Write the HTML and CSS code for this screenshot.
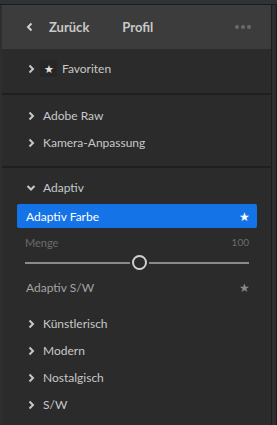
FILE: index.html
```html
<!DOCTYPE html>
<html lang="de">
<head>
    <meta charset="UTF-8">
    <meta name="viewport" content="width=device-width, initial-scale=1.0">
    <title>Profil</title>
    <link rel="stylesheet" href="styles.css">
</head>
<body>
    <div class="top-strip"></div>

    <div class="frame">
        <div class="panel">
            <!-- Header -->
            <div class="header">
                <span class="back">
                    <svg width="8" height="10" viewBox="0 0 8 10"><path d="M5.5 1.5 L2 5 L5.5 8.5" fill="none" stroke="#d0d0d0" stroke-width="2"/></svg>
                </span>
                <span class="back-label">Zurück</span>
                <span class="title">Profil</span>
                <span class="more"><i></i><i></i><i></i></span>
            </div>

            <!-- Favorites -->
            <div class="section fav">
                <div class="row">
                    <span class="chev"><svg width="8" height="10" viewBox="0 0 8 10"><path d="M2.5 1.5 L6 5 L2.5 8.5" fill="none" stroke="#c8c8c8" stroke-width="2"/></svg></span>
                    <span class="star-box">★</span>
                    <span class="label">Favoriten</span>
                </div>
            </div>

            <div class="section groups">
                <div class="row">
                    <span class="chev"><svg width="8" height="10" viewBox="0 0 8 10"><path d="M2.5 1.5 L6 5 L2.5 8.5" fill="none" stroke="#c8c8c8" stroke-width="2"/></svg></span>
                    <span class="label">Adobe Raw</span>
                </div>
                <div class="row">
                    <span class="chev"><svg width="8" height="10" viewBox="0 0 8 10"><path d="M2.5 1.5 L6 5 L2.5 8.5" fill="none" stroke="#c8c8c8" stroke-width="2"/></svg></span>
                    <span class="label">Kamera-Anpassung</span>
                </div>
            </div>

            <div class="section creative">
                <div class="row">
                    <span class="chev"><svg width="10" height="8" viewBox="0 0 10 8"><path d="M1.5 2 L5 5.5 L8.5 2" fill="none" stroke="#c8c8c8" stroke-width="2"/></svg></span>
                    <span class="label">Adaptiv</span>
                </div>

                <div class="profile selected">
                    <span>Adaptiv Farbe</span>
                    <span class="pstar">★</span>
                </div>

                <div class="amount">
                    <div class="amount-head">
                        <span>Menge</span>
                        <span>100</span>
                    </div>
                    <div class="slider">
                        <div class="track left"></div>
                        <div class="knob"></div>
                        <div class="track"></div>
                    </div>
                </div>

                <div class="profile">
                    <span>Adaptiv S/W</span>
                    <span class="pstar">★</span>
                </div>

                <div class="row spaced">
                    <span class="chev"><svg width="8" height="10" viewBox="0 0 8 10"><path d="M2.5 1.5 L6 5 L2.5 8.5" fill="none" stroke="#c8c8c8" stroke-width="2"/></svg></span>
                    <span class="label">Künstlerisch</span>
                </div>
                <div class="row">
                    <span class="chev"><svg width="8" height="10" viewBox="0 0 8 10"><path d="M2.5 1.5 L6 5 L2.5 8.5" fill="none" stroke="#c8c8c8" stroke-width="2"/></svg></span>
                    <span class="label">Modern</span>
                </div>
                <div class="row">
                    <span class="chev"><svg width="8" height="10" viewBox="0 0 8 10"><path d="M2.5 1.5 L6 5 L2.5 8.5" fill="none" stroke="#c8c8c8" stroke-width="2"/></svg></span>
                    <span class="label">Nostalgisch</span>
                </div>
                <div class="row">
                    <span class="chev"><svg width="8" height="10" viewBox="0 0 8 10"><path d="M2.5 1.5 L6 5 L2.5 8.5" fill="none" stroke="#c8c8c8" stroke-width="2"/></svg></span>
                    <span class="label">S/W</span>
                </div>
            </div>
        </div>

        <div class="scroll"></div>
    </div>
</body>
</html>
```

FILE: styles.css
```css
body {
    margin: 0;
    padding: 0;
    font-family: 'Lato', sans-serif;
    font-size: 12px;
    background-color: #2b2b2b;
    color: #c8c8c8;
    height: 425px;
    overflow: hidden;
}

.top-strip {
    height: 4px;
    background-color: #2f3336;
    border-bottom: 1px solid #1b1b1b;
}

.frame {
    display: flex;
    height: 420px;
}

.panel {
    flex: 1;
    border-left: 2px solid #2e2e2e;
    background-color: #2b2b2b;
}

.scroll {
    width: 4px;
    border-left: 1px solid #1c1c1c;
    border-right: 1px solid #1c1c1c;
    background-color: #2e2e2e;
}

.header {
    height: 44px;
    background-color: #3c3c3c;
    display: flex;
    align-items: center;
    font-size: 13px;
    font-weight: bold;
    color: #c9c9c9;
}

.back {
    width: 10px;
    margin-left: 24px;
    display: flex;
}

.back-label {
    margin-left: 13px;
}

.title {
    margin-left: 33px;
}

.more {
    margin-left: auto;
    margin-right: 20px;
    display: flex;
    gap: 2px;
}

.more i {
    width: 4px;
    height: 4px;
    border-radius: 50%;
    background-color: #6a6a6a;
}

.section {
    border-bottom: 2px solid #1f1f1f;
}

.fav {
    padding: 6px 0 11px;
}

.groups {
    padding: 7px 0 10px;
}

.creative {
    padding: 6px 0;
    border-bottom: none;
}

.row {
    height: 27px;
    display: flex;
    align-items: center;
    padding-left: 24px;
}

.row.spaced {
    margin-top: 11px;
}

.chev {
    width: 10px;
    display: flex;
    justify-content: center;
}

.label {
    margin-left: 7px;
}

.star-box {
    width: 17px;
    height: 17px;
    margin-left: 4px;
    background-color: #262626;
    border-radius: 2px;
    display: flex;
    align-items: center;
    justify-content: center;
    font-size: 11px;
    color: #e0e0e0;
}

.fav .label {
    margin-left: 5px;
}

.profile {
    margin: 0 14px 0 15px;
    height: 24px;
    padding: 0 7px 0 9px;
    display: flex;
    align-items: center;
    justify-content: space-between;
    border-radius: 2px;
    color: #a3a3a3;
}

.profile.selected {
    background-color: #1473e6;
    color: #ffffff;
    margin-top: 3px;
}

.pstar {
    font-size: 12px;
    color: #8a8a8a;
}

.selected .pstar {
    color: #ffffff;
}

.amount {
    padding: 8px 22px 5px 23px;
}

.amount-head {
    display: flex;
    justify-content: space-between;
    font-size: 11px;
    line-height: 13px;
    color: #6c6c6c;
}

.amount-head span:last-child {
    font-size: 10px;
}

.slider {
    display: flex;
    align-items: center;
    margin-top: 6px;
}

.track {
    flex: 1;
    height: 2px;
    background-color: #8a8a8a;
}

.track.left {
    flex: none;
    width: 105px;
}

.knob {
    width: 11px;
    height: 11px;
    border: 2px solid #d0d0d0;
    border-radius: 50%;
    margin: 0 2px;
}
```
